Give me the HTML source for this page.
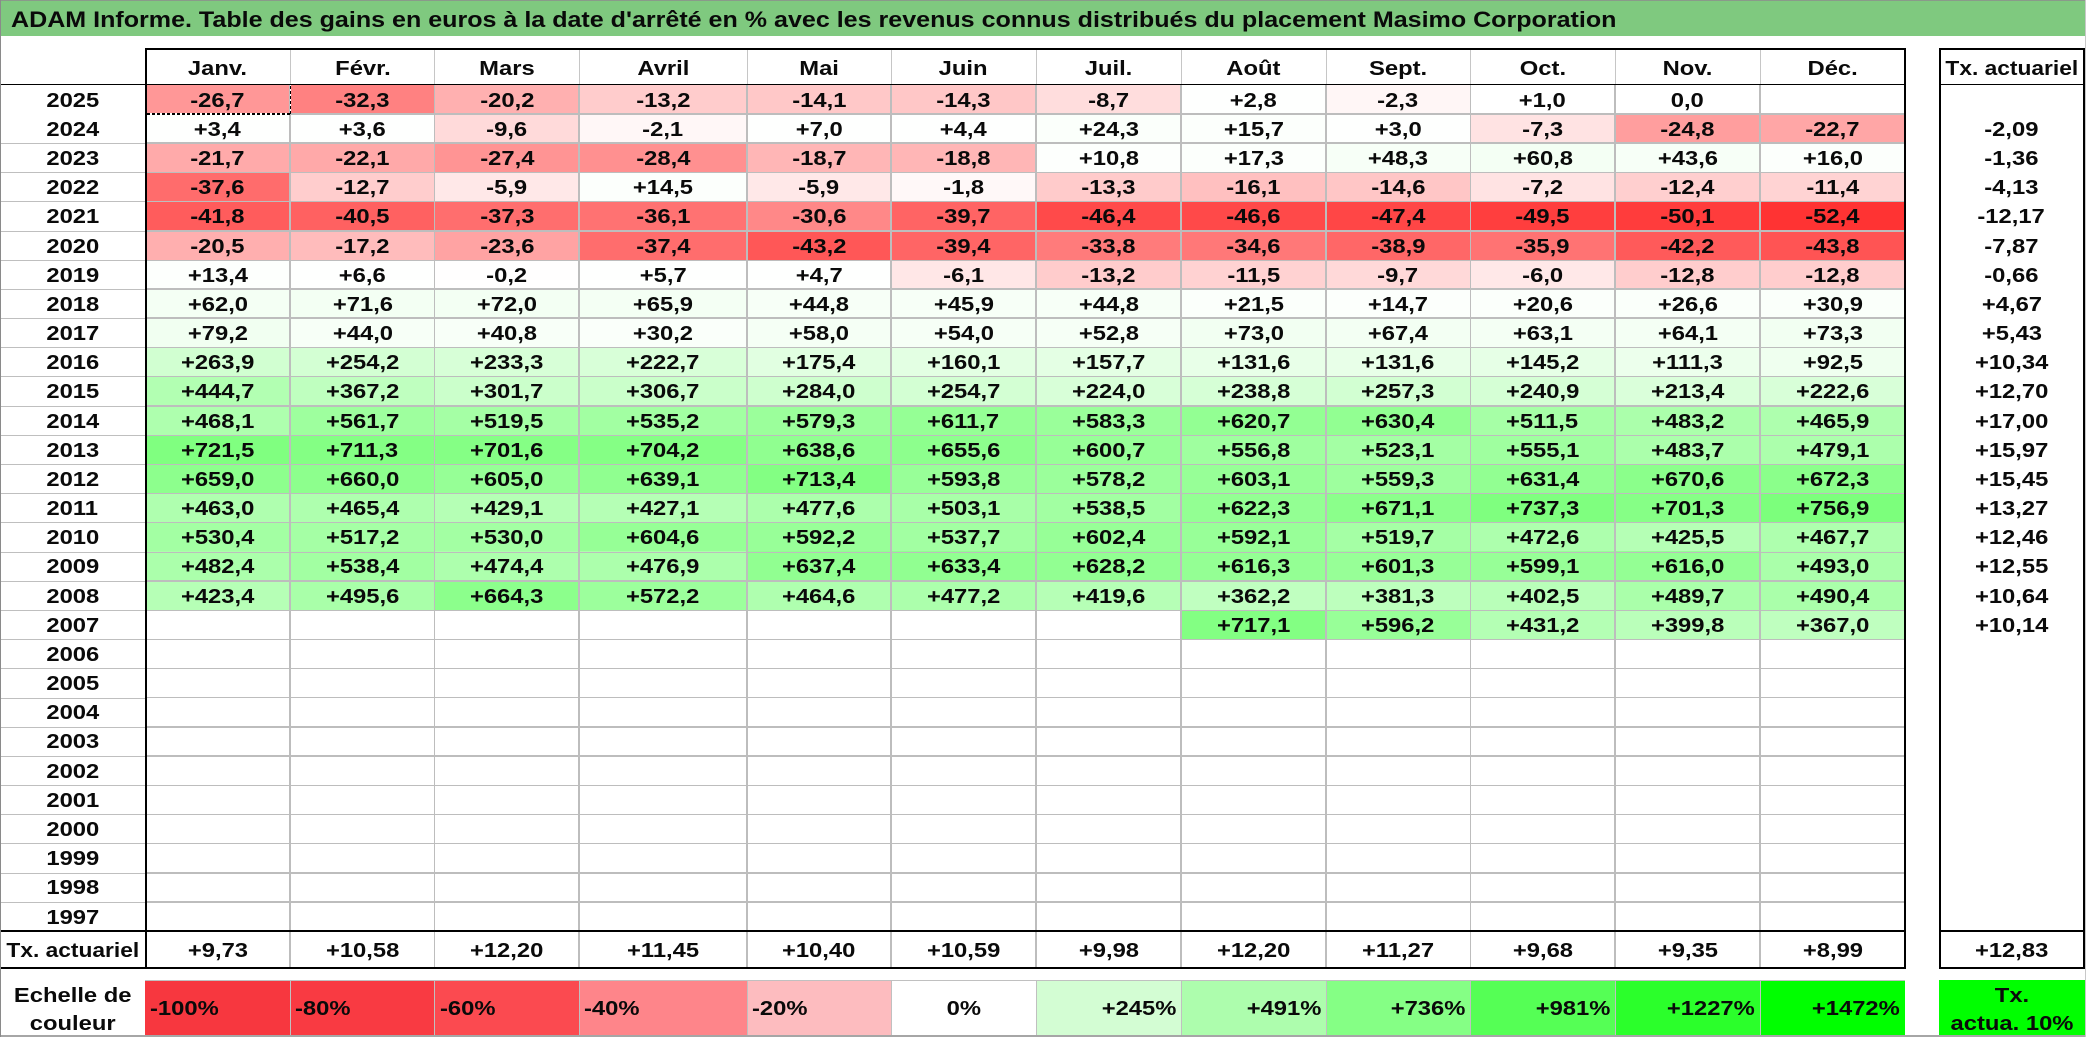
<!DOCTYPE html>
<html lang="fr"><head><meta charset="utf-8"><title>ADAM Informe</title>
<style>
html,body{margin:0;padding:0;background:#fff}
body{position:relative;width:2086px;height:1037px;overflow:hidden;font:bold 20.5px "Liberation Sans",Arial,sans-serif;color:#0a0a0a}
#title{position:absolute;left:1px;top:1px;width:2084px;height:35px;background:#7fc97f;line-height:33px;white-space:nowrap}
#title b{position:absolute;left:10px;top:2px;font-size:22px;display:block;transform:scaleX(1.139);transform-origin:0 50%}
.abs{position:absolute}
#head,#data,#tot,#leg{position:absolute;left:145px}
#head{top:49px}
#data{top:84.7px}
#tot{top:932px}
#leg{top:980px}
.r{display:grid;grid-template-columns:145px 145px 144px 168px 144px 145px 145px 145px 144px 145px 145px 145px;height:29.18px;line-height:32px;text-align:center}
#head .r{height:36px;line-height:39px}
#tot .r{height:36px;line-height:37px}
#leg .r{height:55px;line-height:58px}
.r i{font-style:normal;display:block;overflow:hidden;white-space:nowrap}
b{font-weight:bold;display:inline-block;transform:scaleX(1.16)}
#lab,#rate{position:absolute;top:84.7px;width:145px;text-align:center}
#lab{left:0}
#rate{left:1939px}
#lab div,#rate div{height:29.18px;line-height:32px}
.c{position:absolute;width:145px;text-align:center;height:36px;line-height:37px}
.h{position:absolute;left:147px;width:1758px;background:#bdbdbd;height:1px}
.H{height:2px}
.l{position:absolute;left:0;width:145px;background:#bfbfbf;height:1px}
.v{position:absolute;background:#bdbdbd;width:2px;top:85px;height:883px}
.vh{position:absolute;background:#c6c6c6;width:1px;top:49px;height:35px}
.k{position:absolute;background:#000}
.lg{padding:0 5px}
.lg b{transform-origin:0 50%}
.rg b{transform-origin:100% 50%}
.vl{position:absolute;background:#c0c0c0;width:1px;top:980px;height:55px}
</style></head><body>
<div id="title"><b>ADAM Informe. Table des gains en euros à la date d'arrêté en % avec les revenus connus distribués du placement Masimo Corporation</b></div>

<div id="head"><div class="r"><i><b>Janv.</b></i><i><b>Févr.</b></i><i><b>Mars</b></i><i><b>Avril</b></i><i><b>Mai</b></i><i><b>Juin</b></i><i><b>Juil.</b></i><i><b>Août</b></i><i><b>Sept.</b></i><i><b>Oct.</b></i><i><b>Nov.</b></i><i><b>Déc.</b></i></div></div>

<div id="lab">
<div><b>2025</b></div><div><b>2024</b></div><div><b>2023</b></div><div><b>2022</b></div><div><b>2021</b></div><div><b>2020</b></div><div><b>2019</b></div><div><b>2018</b></div><div><b>2017</b></div><div><b>2016</b></div><div><b>2015</b></div><div><b>2014</b></div><div><b>2013</b></div><div><b>2012</b></div><div><b>2011</b></div><div><b>2010</b></div><div><b>2009</b></div><div><b>2008</b></div><div><b>2007</b></div><div><b>2006</b></div><div><b>2005</b></div><div><b>2004</b></div><div><b>2003</b></div><div><b>2002</b></div><div><b>2001</b></div><div><b>2000</b></div><div><b>1999</b></div><div><b>1998</b></div><div><b>1997</b></div>
</div>

<div id="data">
<div class="r"><i style="background:#ff9797"><b>-26,7</b></i><i style="background:#ff8181"><b>-32,3</b></i><i style="background:#ffb0b0"><b>-20,2</b></i><i style="background:#ffcccc"><b>-13,2</b></i><i style="background:#ffc8c8"><b>-14,1</b></i><i style="background:#ffc7c7"><b>-14,3</b></i><i style="background:#ffdddd"><b>-8,7</b></i><i style="background:#feffFe"><b>+2,8</b></i><i style="background:#fff6f6"><b>-2,3</b></i><i><b>+1,0</b></i><i><b>0,0</b></i><i></i></div>
<div class="r"><i style="background:#feffFe"><b>+3,4</b></i><i style="background:#feffFe"><b>+3,6</b></i><i style="background:#ffdada"><b>-9,6</b></i><i style="background:#fff7f7"><b>-2,1</b></i><i style="background:#feffFe"><b>+7,0</b></i><i style="background:#feffFe"><b>+4,4</b></i><i style="background:#fbfffb"><b>+24,3</b></i><i style="background:#fcfffc"><b>+15,7</b></i><i style="background:#feffFe"><b>+3,0</b></i><i style="background:#ffe3e3"><b>-7,3</b></i><i style="background:#ff9e9e"><b>-24,8</b></i><i style="background:#ffa6a6"><b>-22,7</b></i></div>
<div class="r"><i style="background:#ffaaaa"><b>-21,7</b></i><i style="background:#ffa9a9"><b>-22,1</b></i><i style="background:#ff9494"><b>-27,4</b></i><i style="background:#ff9090"><b>-28,4</b></i><i style="background:#ffb6b6"><b>-18,7</b></i><i style="background:#ffb6b6"><b>-18,8</b></i><i style="background:#fdfffd"><b>+10,8</b></i><i style="background:#fcfffc"><b>+17,3</b></i><i style="background:#f7fff7"><b>+48,3</b></i><i style="background:#f4fff4"><b>+60,8</b></i><i style="background:#f7fff7"><b>+43,6</b></i><i style="background:#fcfffc"><b>+16,0</b></i></div>
<div class="r"><i style="background:#ff6c6c"><b>-37,6</b></i><i style="background:#ffcdcd"><b>-12,7</b></i><i style="background:#ffe8e8"><b>-5,9</b></i><i style="background:#fcfffc"><b>+14,5</b></i><i style="background:#ffe8e8"><b>-5,9</b></i><i style="background:#fff8f8"><b>-1,8</b></i><i style="background:#ffcbcb"><b>-13,3</b></i><i style="background:#ffc0c0"><b>-16,1</b></i><i style="background:#ffc6c6"><b>-14,6</b></i><i style="background:#ffe3e3"><b>-7,2</b></i><i style="background:#ffcfcf"><b>-12,4</b></i><i style="background:#ffd3d3"><b>-11,4</b></i></div>
<div class="r"><i style="background:#ff5c5c"><b>-41,8</b></i><i style="background:#ff6161"><b>-40,5</b></i><i style="background:#ff6e6e"><b>-37,3</b></i><i style="background:#ff7272"><b>-36,1</b></i><i style="background:#ff8888"><b>-30,6</b></i><i style="background:#ff6464"><b>-39,7</b></i><i style="background:#ff4a4a"><b>-46,4</b></i><i style="background:#ff4949"><b>-46,6</b></i><i style="background:#ff4646"><b>-47,4</b></i><i style="background:#ff3e3e"><b>-49,5</b></i><i style="background:#ff3c3c"><b>-50,1</b></i><i style="background:#ff3333"><b>-52,4</b></i></div>
<div class="r"><i style="background:#ffafaf"><b>-20,5</b></i><i style="background:#ffbcbc"><b>-17,2</b></i><i style="background:#ffa3a3"><b>-23,6</b></i><i style="background:#ff6d6d"><b>-37,4</b></i><i style="background:#ff5757"><b>-43,2</b></i><i style="background:#ff6565"><b>-39,4</b></i><i style="background:#ff7b7b"><b>-33,8</b></i><i style="background:#ff7878"><b>-34,6</b></i><i style="background:#ff6767"><b>-38,9</b></i><i style="background:#ff7373"><b>-35,9</b></i><i style="background:#ff5a5a"><b>-42,2</b></i><i style="background:#ff5454"><b>-43,8</b></i></div>
<div class="r"><i style="background:#fdfffd"><b>+13,4</b></i><i style="background:#feffFe"><b>+6,6</b></i><i style="background:#fffefe"><b>-0,2</b></i><i style="background:#feffFe"><b>+5,7</b></i><i style="background:#feffFe"><b>+4,7</b></i><i style="background:#ffe7e7"><b>-6,1</b></i><i style="background:#ffcccc"><b>-13,2</b></i><i style="background:#ffd2d2"><b>-11,5</b></i><i style="background:#ffd9d9"><b>-9,7</b></i><i style="background:#ffe8e8"><b>-6,0</b></i><i style="background:#ffcdcd"><b>-12,8</b></i><i style="background:#ffcdcd"><b>-12,8</b></i></div>
<div class="r"><i style="background:#f4fff4"><b>+62,0</b></i><i style="background:#f3fff3"><b>+71,6</b></i><i style="background:#f3fff3"><b>+72,0</b></i><i style="background:#f4fff4"><b>+65,9</b></i><i style="background:#f7fff7"><b>+44,8</b></i><i style="background:#f7fff7"><b>+45,9</b></i><i style="background:#f7fff7"><b>+44,8</b></i><i style="background:#fbfffb"><b>+21,5</b></i><i style="background:#fcfffc"><b>+14,7</b></i><i style="background:#fbfffb"><b>+20,6</b></i><i style="background:#fafffa"><b>+26,6</b></i><i style="background:#fafffa"><b>+30,9</b></i></div>
<div class="r"><i style="background:#f1fff1"><b>+79,2</b></i><i style="background:#f7fff7"><b>+44,0</b></i><i style="background:#f8fff8"><b>+40,8</b></i><i style="background:#fafffa"><b>+30,2</b></i><i style="background:#f5fff5"><b>+58,0</b></i><i style="background:#f6fff6"><b>+54,0</b></i><i style="background:#f6fff6"><b>+52,8</b></i><i style="background:#f2fff2"><b>+73,0</b></i><i style="background:#f3fff3"><b>+67,4</b></i><i style="background:#f4fff4"><b>+63,1</b></i><i style="background:#f4fff4"><b>+64,1</b></i><i style="background:#f2fff2"><b>+73,3</b></i></div>
<div class="r"><i style="background:#d1ffd1"><b>+263,9</b></i><i style="background:#d3ffd3"><b>+254,2</b></i><i style="background:#d7ffd7"><b>+233,3</b></i><i style="background:#d8ffd8"><b>+222,7</b></i><i style="background:#e1ffe1"><b>+175,4</b></i><i style="background:#e3ffe3"><b>+160,1</b></i><i style="background:#e4ffe4"><b>+157,7</b></i><i style="background:#e8ffe8"><b>+131,6</b></i><i style="background:#e8ffe8"><b>+131,6</b></i><i style="background:#e6ffe6"><b>+145,2</b></i><i style="background:#ecffec"><b>+111,3</b></i><i style="background:#efffef"><b>+92,5</b></i></div>
<div class="r"><i style="background:#b2ffb2"><b>+444,7</b></i><i style="background:#bfffbf"><b>+367,2</b></i><i style="background:#cbffcb"><b>+301,7</b></i><i style="background:#caffca"><b>+306,7</b></i><i style="background:#ceffce"><b>+284,0</b></i><i style="background:#d3ffd3"><b>+254,7</b></i><i style="background:#d8ffd8"><b>+224,0</b></i><i style="background:#d6ffd6"><b>+238,8</b></i><i style="background:#d2ffd2"><b>+257,3</b></i><i style="background:#d5ffd5"><b>+240,9</b></i><i style="background:#daffda"><b>+213,4</b></i><i style="background:#d8ffd8"><b>+222,6</b></i></div>
<div class="r"><i style="background:#aeffae"><b>+468,1</b></i><i style="background:#9eff9e"><b>+561,7</b></i><i style="background:#a5ffa5"><b>+519,5</b></i><i style="background:#a2ffa2"><b>+535,2</b></i><i style="background:#9bff9b"><b>+579,3</b></i><i style="background:#95ff95"><b>+611,7</b></i><i style="background:#9aff9a"><b>+583,3</b></i><i style="background:#93ff93"><b>+620,7</b></i><i style="background:#92ff92"><b>+630,4</b></i><i style="background:#a6ffa6"><b>+511,5</b></i><i style="background:#abffab"><b>+483,2</b></i><i style="background:#aeffae"><b>+465,9</b></i></div>
<div class="r"><i style="background:#80ff80"><b>+721,5</b></i><i style="background:#84ff84"><b>+711,3</b></i><i style="background:#85ff85"><b>+701,6</b></i><i style="background:#85ff85"><b>+704,2</b></i><i style="background:#90ff90"><b>+638,6</b></i><i style="background:#8dff8d"><b>+655,6</b></i><i style="background:#97ff97"><b>+600,7</b></i><i style="background:#9fff9f"><b>+556,8</b></i><i style="background:#a4ffa4"><b>+523,1</b></i><i style="background:#9fff9f"><b>+555,1</b></i><i style="background:#abffab"><b>+483,7</b></i><i style="background:#acffac"><b>+479,1</b></i></div>
<div class="r"><i style="background:#8dff8d"><b>+659,0</b></i><i style="background:#8dff8d"><b>+660,0</b></i><i style="background:#96ff96"><b>+605,0</b></i><i style="background:#90ff90"><b>+639,1</b></i><i style="background:#83ff83"><b>+713,4</b></i><i style="background:#98ff98"><b>+593,8</b></i><i style="background:#9bff9b"><b>+578,2</b></i><i style="background:#97ff97"><b>+603,1</b></i><i style="background:#9eff9e"><b>+559,3</b></i><i style="background:#92ff92"><b>+631,4</b></i><i style="background:#8bff8b"><b>+670,6</b></i><i style="background:#8bff8b"><b>+672,3</b></i></div>
<div class="r"><i style="background:#afffaf"><b>+463,0</b></i><i style="background:#aeffae"><b>+465,4</b></i><i style="background:#b5ffb5"><b>+429,1</b></i><i style="background:#b5ffb5"><b>+427,1</b></i><i style="background:#acffac"><b>+477,6</b></i><i style="background:#a8ffa8"><b>+503,1</b></i><i style="background:#a2ffa2"><b>+538,5</b></i><i style="background:#93ff93"><b>+622,3</b></i><i style="background:#8bff8b"><b>+671,1</b></i><i style="background:#7fff7f"><b>+737,3</b></i><i style="background:#86ff86"><b>+701,3</b></i><i style="background:#7cff7c"><b>+756,9</b></i></div>
<div class="r"><i style="background:#a3ffa3"><b>+530,4</b></i><i style="background:#a5ffa5"><b>+517,2</b></i><i style="background:#a3ffa3"><b>+530,0</b></i><i style="background:#96ff96"><b>+604,6</b></i><i style="background:#98ff98"><b>+592,2</b></i><i style="background:#a2ffa2"><b>+537,7</b></i><i style="background:#97ff97"><b>+602,4</b></i><i style="background:#98ff98"><b>+592,1</b></i><i style="background:#a5ffa5"><b>+519,7</b></i><i style="background:#adffad"><b>+472,6</b></i><i style="background:#b5ffb5"><b>+425,5</b></i><i style="background:#aeffae"><b>+467,7</b></i></div>
<div class="r"><i style="background:#abffab"><b>+482,4</b></i><i style="background:#a2ffa2"><b>+538,4</b></i><i style="background:#adffad"><b>+474,4</b></i><i style="background:#acffac"><b>+476,9</b></i><i style="background:#91ff91"><b>+637,4</b></i><i style="background:#91ff91"><b>+633,4</b></i><i style="background:#92ff92"><b>+628,2</b></i><i style="background:#94ff94"><b>+616,3</b></i><i style="background:#97ff97"><b>+601,3</b></i><i style="background:#97ff97"><b>+599,1</b></i><i style="background:#94ff94"><b>+616,0</b></i><i style="background:#aaffaa"><b>+493,0</b></i></div>
<div class="r"><i style="background:#b6ffb6"><b>+423,4</b></i><i style="background:#a9ffa9"><b>+495,6</b></i><i style="background:#8cff8c"><b>+664,3</b></i><i style="background:#9cff9c"><b>+572,2</b></i><i style="background:#afffaf"><b>+464,6</b></i><i style="background:#acffac"><b>+477,2</b></i><i style="background:#b6ffb6"><b>+419,6</b></i><i style="background:#c0ffc0"><b>+362,2</b></i><i style="background:#bdffbd"><b>+381,3</b></i><i style="background:#b9ffb9"><b>+402,5</b></i><i style="background:#aaffaa"><b>+489,7</b></i><i style="background:#aaffaa"><b>+490,4</b></i></div>
<div class="r"><i></i><i></i><i></i><i></i><i></i><i></i><i></i><i style="background:#83ff83"><b>+717,1</b></i><i style="background:#98ff98"><b>+596,2</b></i><i style="background:#b4ffb4"><b>+431,2</b></i><i style="background:#baffba"><b>+399,8</b></i><i style="background:#bfffbf"><b>+367,0</b></i></div>
</div>

<div id="rate">
<div></div><div><b>-2,09</b></div><div><b>-1,36</b></div><div><b>-4,13</b></div><div><b>-12,17</b></div><div><b>-7,87</b></div><div><b>-0,66</b></div><div><b>+4,67</b></div><div><b>+5,43</b></div><div><b>+10,34</b></div><div><b>+12,70</b></div><div><b>+17,00</b></div><div><b>+15,97</b></div><div><b>+15,45</b></div><div><b>+13,27</b></div><div><b>+12,46</b></div><div><b>+12,55</b></div><div><b>+10,64</b></div><div><b>+10,14</b></div>
</div>

<!-- horizontal grid -->
<div class="h H" style="top:113px"></div><div class="h H" style="top:142px"></div><div class="h" style="top:172px"></div><div class="h" style="top:201px"></div><div class="h H" style="top:230px"></div><div class="h" style="top:260px"></div><div class="h H" style="top:288px"></div><div class="h H" style="top:317px"></div><div class="h" style="top:347px"></div><div class="h" style="top:376px"></div><div class="h H" style="top:405px"></div><div class="h" style="top:435px"></div><div class="h" style="top:464px"></div><div class="h" style="top:493px"></div><div class="h" style="top:522px"></div><div class="h" style="top:552px"></div><div class="h H" style="top:580px"></div><div class="h" style="top:610px"></div>
<div class="h" style="top:639px"></div><div class="h" style="top:668px"></div><div class="h" style="top:697px"></div><div class="h H" style="top:726px"></div><div class="h H" style="top:755px"></div><div class="h" style="top:785px"></div><div class="h" style="top:814px"></div><div class="h" style="top:843px"></div><div class="h H" style="top:872px"></div><div class="h H" style="top:901px"></div>
<!-- label column grid -->
<div class="l" style="top:143px"></div><div class="l" style="top:172px"></div><div class="l" style="top:201px"></div><div class="l" style="top:231px"></div><div class="l" style="top:260px"></div><div class="l" style="top:289px"></div><div class="l" style="top:318px"></div><div class="l" style="top:347px"></div><div class="l" style="top:376px"></div><div class="l" style="top:406px"></div><div class="l" style="top:435px"></div><div class="l" style="top:464px"></div><div class="l" style="top:493px"></div><div class="l" style="top:522px"></div><div class="l" style="top:552px"></div><div class="l" style="top:581px"></div><div class="l" style="top:610px"></div><div class="l" style="top:639px"></div><div class="l" style="top:668px"></div><div class="l" style="top:698px"></div><div class="l" style="top:727px"></div><div class="l" style="top:756px"></div><div class="l" style="top:785px"></div><div class="l" style="top:814px"></div><div class="l" style="top:843px"></div><div class="l" style="top:873px"></div><div class="l" style="top:902px"></div>
<!-- vertical grid -->
<div class="v" style="left:289px"></div><div class="v" style="left:434px;width:1px"></div><div class="v" style="left:578px"></div><div class="v" style="left:746px"></div><div class="v" style="left:890px"></div><div class="v" style="left:1035px"></div><div class="v" style="left:1180px"></div><div class="v" style="left:1325px"></div><div class="v" style="left:1470px;width:1px"></div><div class="v" style="left:1614px"></div><div class="v" style="left:1759px"></div>
<div class="vh" style="left:290px"></div><div class="vh" style="left:434px"></div><div class="vh" style="left:579px"></div><div class="vh" style="left:747px"></div><div class="vh" style="left:891px"></div><div class="vh" style="left:1036px"></div><div class="vh" style="left:1181px"></div><div class="vh" style="left:1326px"></div><div class="vh" style="left:1470px"></div><div class="vh" style="left:1615px"></div><div class="vh" style="left:1760px"></div>

<!-- dashed selection -->
<div class="abs" style="left:147px;top:113px;width:143px;height:2px;background:repeating-linear-gradient(90deg,#000 0 3px,#fff 3px 5px)"></div>
<div class="abs" style="left:290px;top:85px;width:1px;height:29px;background:repeating-linear-gradient(0deg,#000 0 3px,#fff 3px 5px)"></div>

<div class="c" style="left:0;top:932px"><b style="transform:scaleX(1.11)">Tx. actuariel</b></div>
<div class="c" style="left:1939px;top:50px"><b style="transform:scaleX(1.11)">Tx. actuariel</b></div>
<div class="c" style="left:1939px;top:932px"><b>+12,83</b></div>
<div id="tot"><div class="r"><i><b>+9,73</b></i><i><b>+10,58</b></i><i><b>+12,20</b></i><i><b>+11,45</b></i><i><b>+10,40</b></i><i><b>+10,59</b></i><i><b>+9,98</b></i><i><b>+12,20</b></i><i><b>+11,27</b></i><i><b>+9,68</b></i><i><b>+9,35</b></i><i><b>+8,99</b></i></div></div>

<!-- black frames -->
<div class="k" style="left:145px;top:48px;width:1761px;height:2px"></div>
<div class="k" style="left:145px;top:48px;width:2px;height:921px"></div>
<div class="k" style="left:1904px;top:48px;width:2px;height:921px"></div>
<div class="k" style="left:0;top:84px;width:1906px;height:1px"></div>
<div class="k" style="left:0;top:930px;width:1906px;height:2px"></div>
<div class="k" style="left:0;top:967px;width:1906px;height:2px"></div>
<div class="k" style="left:0;top:84px;width:1px;height:885px"></div>
<div class="k" style="left:1939px;top:48px;width:146px;height:2px"></div>
<div class="k" style="left:1939px;top:48px;width:2px;height:921px"></div>
<div class="k" style="left:2083px;top:48px;width:2px;height:921px"></div>
<div class="k" style="left:1939px;top:84px;width:146px;height:1px"></div>
<div class="k" style="left:1939px;top:930px;width:146px;height:2px"></div>
<div class="k" style="left:1939px;top:967px;width:146px;height:2px"></div>

<!-- legend -->
<div class="abs" style="left:0;top:982px;width:145px;text-align:center;line-height:28px;height:56px"><b>Echelle de<br>couleur</b></div>
<div id="leg"><div class="r">
<i class="lg" style="background:#f7373f;text-align:left"><b>-100%</b></i>
<i class="lg" style="background:#f93a42;text-align:left"><b>-80%</b></i>
<i class="lg" style="background:#fb4a50;text-align:left"><b>-60%</b></i>
<i class="lg" style="background:#fe858a;text-align:left"><b>-40%</b></i>
<i class="lg" style="background:#fdbcbf;text-align:left"><b>-20%</b></i>
<i style="background:#fff"><b>0%</b></i>
<i class="lg rg" style="background:#d3fdd3;text-align:right"><b>+245%</b></i>
<i class="lg rg" style="background:#adfdad;text-align:right"><b>+491%</b></i>
<i class="lg rg" style="background:#85ff85;text-align:right"><b>+736%</b></i>
<i class="lg rg" style="background:#55ff55;text-align:right"><b>+981%</b></i>
<i class="lg rg" style="background:#2bff2b;text-align:right"><b>+1227%</b></i>
<i class="lg rg" style="background:#00ff00;text-align:right"><b>+1472%</b></i>
</div></div>
<div class="vl" style="left:290px"></div><div class="vl" style="left:434px"></div><div class="vl" style="left:579px"></div><div class="vl" style="left:747px"></div><div class="vl" style="left:891px"></div><div class="vl" style="left:1036px"></div><div class="vl" style="left:1181px"></div><div class="vl" style="left:1326px"></div><div class="vl" style="left:1470px"></div><div class="vl" style="left:1615px"></div><div class="vl" style="left:1760px"></div>
<div class="abs" style="left:145px;top:980px;width:1760px;height:1px;background:#c0c0c0"></div>
<div class="abs" style="left:1939px;top:980px;width:146px;height:55px;background:#00ff00;text-align:center;line-height:28px"><b style="position:relative;top:2px">Tx.<br>actua. 10%</b></div>

<!-- outer edge -->
<div class="abs" style="left:0;top:0;width:2086px;height:1px;background:#8a9a8a"></div>
<div class="abs" style="left:0;top:1035px;width:2086px;height:2px;background:#a6a6a6"></div>
<div class="abs" style="left:0;top:0;width:1px;height:1037px;background:#8a8a8a"></div>
<div class="abs" style="left:2085px;top:0;width:1px;height:1037px;background:#c8c8c8"></div>
</body></html>
